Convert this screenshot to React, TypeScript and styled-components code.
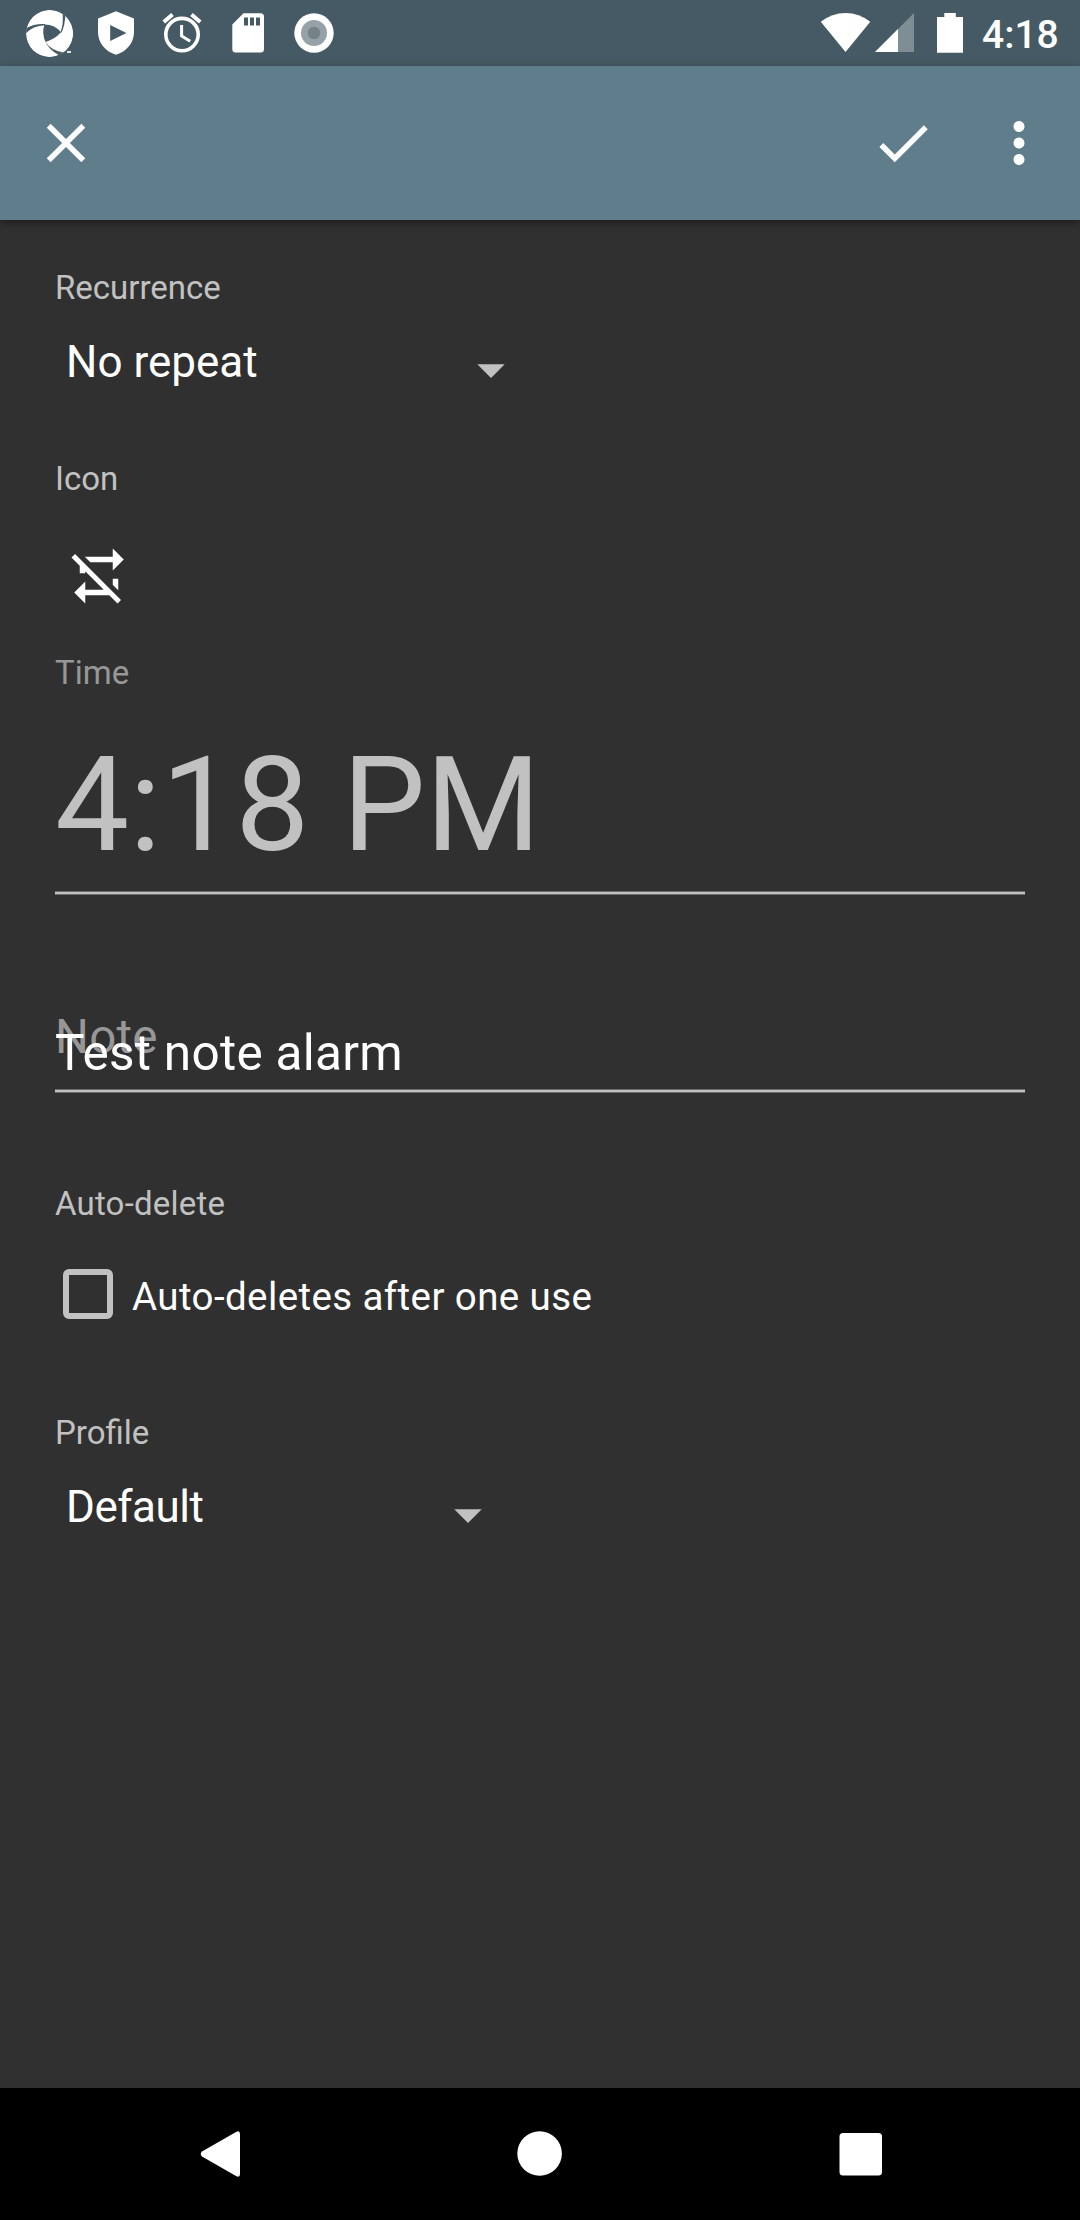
import React from 'react';
import styled, { createGlobalStyle } from 'styled-components';

const GlobalStyle = createGlobalStyle`
  *, *::before, *::after { box-sizing: border-box; }
  body { margin: 0; background: #303030; }
`;

const Screen = styled.div`
  display: flex;
  flex-direction: column;
  width: 1080px;
  height: 2220px;
  overflow: hidden;
  background: #303030;
  color: #fff;
  font-family: Roboto, sans-serif;
`;

const StatusBar = styled.header`
  display: flex;
  justify-content: space-between;
  flex: none;
  height: 66px;
  background: #455a64;
`;

const StatusGroup = styled.div`
  display: flex;
  align-items: center;
`;

const Clock = styled.span`
  width: 98px;
  font-size: 39px;
  font-weight: 500;
  line-height: 66px;
  padding-top: 4px;
`;

const Toolbar = styled.nav`
  display: flex;
  align-items: center;
  flex: none;
  height: 154px;
  padding: 0 28px 0 33px;
  background: #607d8b;
  box-shadow: 0 3px 8px rgba(0, 0, 0, 0.4);
`;

const IconButton = styled.button<{ $gap?: number }>`
  display: flex;
  flex: none;
  margin: 0 0 0 ${(p) => p.$gap ?? 0}px;
  padding: 0;
  border: 0;
  background: none;
  color: inherit;
`;

const Spacer = styled.div`
  flex: 1;
`;

const Form = styled.main`
  display: flex;
  flex-direction: column;
  flex: 1;
  padding: 48px 55px 0;
`;

const Field = styled.section<{ $height: number }>`
  display: flex;
  flex-direction: column;
  flex: none;
  height: ${(p) => p.$height}px;
`;

const Label = styled.label<{ $dim?: boolean; $tracking?: number }>`
  font-size: 33px;
  line-height: 39px;
  letter-spacing: ${(p) => p.$tracking ?? 0}px;
  color: ${(p) => (p.$dim ? '#979797' : '#c1c1c1')};
`;

const Dropdown = styled.div<{ $width: number; $tracking?: number }>`
  display: flex;
  justify-content: space-between;
  width: ${(p) => p.$width}px;
  margin-top: 29px;
  padding-left: 11px;
  font-size: 44px;
  line-height: 52px;
  letter-spacing: ${(p) => p.$tracking ?? 0}px;
`;

const Arrow = styled.svg`
  width: 28px;
  height: 14px;
  margin-top: 28px;
  fill: #c1c1c1;
`;

const IconPicker = styled.div`
  padding: 45px 0 0 11px;
  display: flex;
`;

const Underlined = styled.div`
  background: linear-gradient(#6c6c6c 1px, #c1c1c1 1px, #c1c1c1 3px, #6c6c6c 3px) bottom / 100% 4px no-repeat;
`;

const TimeValue = styled(Underlined)`
  height: 203px;
  padding-top: 36px;
  font-size: 132px;
  line-height: 155px;
  color: #c1c1c1;
`;

const NoteValue = styled(Underlined)`
  position: relative;
  height: 74px;
  padding-top: 5px;
  font-size: 49.5px;
  line-height: 58px;
  letter-spacing: 0.28px;
`;

const FloatingHint = styled.span`
  position: absolute;
  left: 0;
  top: -10px;
  font-size: 47.5px;
  line-height: 56px;
  color: #979797;
`;

const NoteText = styled.span`
  position: relative;
`;

const CheckRow = styled.div`
  display: flex;
  align-items: center;
  height: 50px;
  margin: 46px 0 0 8px;
  font-size: 38.5px;
  letter-spacing: 0.4px;
`;

const CheckBox = styled.span`
  width: 50px;
  height: 50px;
  margin-right: 19px;
  border: 6px solid #c1c1c1;
  border-radius: 6px;
`;

const CheckText = styled.span`
  padding-top: 6px;
  line-height: 46px;
`;

const NavBar = styled.footer`
  display: flex;
  align-items: center;
  justify-content: space-between;
  flex: none;
  height: 132px;
  padding: 0 197px 0 200px;
  background: #000;
`;

const DropArrow = () => (
  <Arrow viewBox="0 0 28 14">
    <path d="M.3.3h27.4L14 14z" />
  </Arrow>
);

const MaterialIcon = ({ d }: { d: string }) => (
  <svg width="66" height="66" viewBox="0 0 24 24" fill="#fff">
    <path d={d} />
  </svg>
);

const NotificationIcons = () => (
  <svg width="350" height="66" viewBox="0 0 350 66" fill="#fff">
    <clipPath id="disc">
      <circle cx="49.600" cy="33.500" r="23.600" />
    </clipPath>
    <g clipPath="url(#disc)">
      <circle cx="49.600" cy="33.500" r="23.600" />
      <g fill="#455a64">
        <path d="M44.500 24.500Q55 24.500 61 32.300Q54.500 39.500 45.500 42Q41.500 33 44.500 24.500z" />
        <path d="M26 28.300Q34 23.500 45 24V25.200Q33 25.500 25 34z" />
        <path d="M60.300 32.300Q63.800 25 62.500 12L65.500 13.500Q65 26 61.300 32.800z" />
        <path d="M45 41.500Q51 50.500 64 52.800L69 53V57H56.500L58 54.500Q50 50.500 45 41.500z" />
      </g>
    </g>
    <path d="M67 51h4v2h-4z" opacity=".85" />
    <path
      fillRule="evenodd"
      d="M116 11.300L134 18.500V32C134 43 126.500 51.500 116 54.800C105.500 51.500 98 43 98 32V18.500zM110.200 25v16l16.200-8z"
    />
    <g fill="none" stroke="#fff" strokeWidth="3.600">
      <circle cx="182" cy="34.600" r="16.200" />
      <path d="M181.600 25v11l8.600 5.300" strokeWidth="3" />
      <path d="M163.800 22l8.700-7.400M200.200 22l-8.700-7.400" strokeWidth="4" />
    </g>
    <path
      fillRule="evenodd"
      d="M243.500 13.200H260.500Q264 13.200 264 16.700V49Q264 52.500 260.500 52.500H235.700Q232.300 52.500 232.300 49V24.400zM244 17.500v8h4v-8zM250 17.500v8h4v-8zM256 17.500v8h4v-8z"
    />
    <circle cx="314" cy="33" r="19.700" />
    <circle cx="314" cy="33" r="13" fill="#96a2a8" />
    <circle cx="314" cy="33" r="6.200" fill="#748389" />
  </svg>
);

const SystemIcons = () => (
  <svg width="162" height="66" viewBox="820 0 162 66" fill="#fff">
    <path d="M820.800 21.800Q832 13 845.500 13T870.300 21.800L845.500 52z" />
    <path d="M914 13V52H875z" fill="#7f8e94" />
    <path d="M898 29V52H875z" />
    <path d="M944.300 13h11.500v4H963v35.700H937V17h7.300z" />
  </svg>
);

export default function App() {
  return (
    <Screen>
      <GlobalStyle />
      <StatusBar>
        <NotificationIcons />
        <StatusGroup>
          <SystemIcons />
          <Clock>4:18</Clock>
        </StatusGroup>
      </StatusBar>
      <Toolbar>
        <IconButton aria-label="Close">
          <MaterialIcon d="M19 6.410L17.590 5 12 10.590 6.410 5 5 6.410 10.590 12 5 17.590 6.410 19 12 13.410 17.590 19 19 17.590 13.410 12z" />
        </IconButton>
        <Spacer />
        <IconButton aria-label="Save">
          <MaterialIcon d="M9 16.170L4.830 12l-1.420 1.410L9 19 21 7l-1.410-1.410z" />
        </IconButton>
        <IconButton aria-label="More" $gap={50}>
          <MaterialIcon d="M12 8c1.100 0 2-.900 2-2s-.900-2-2-2-2 .900-2 2 .900 2 2 2zm0 2c-1.100 0-2 .900-2 2s.900 2 2 2 2-.900 2-2-.900-2-2-2zm0 6c-1.100 0-2 .900-2 2s.900 2 2 2 2-.900 2-2-.900-2-2-2z" />
        </IconButton>
      </Toolbar>
      <Form>
        <Field $height={191}>
          <Label>Recurrence</Label>
          <Dropdown $width={449.5}>
            No repeat
            <DropArrow />
          </Dropdown>
        </Field>
        <Field $height={194}>
          <Label>Icon</Label>
          <IconPicker>
            <MaterialIcon d="M2 5.270L3.280 4L20 20.720L18.730 22L15.730 19H7V22L3 18L7 14V17H13.730L7 10.270V11H5V8.270L2 5.270M17 13H19V17.180L17 15.180V13M17 5V2L21 6L17 10V7H8.820L6.820 5H17Z" />
          </IconPicker>
        </Field>
        <Field $height={366}>
          <Label $dim>Time</Label>
          <TimeValue>4:18 PM</TimeValue>
        </Field>
        <Field $height={165}>
          <NoteValue>
            <FloatingHint>Note</FloatingHint>
            <NoteText>Test note alarm</NoteText>
          </NoteValue>
        </Field>
        <Field $height={229}>
          <Label $tracking={0.2}>Auto-delete</Label>
          <CheckRow>
            <CheckBox />
            <CheckText>Auto-deletes after one use</CheckText>
          </CheckRow>
        </Field>
        <Field $height={160}>
          <Label>Profile</Label>
          <Dropdown $width={427} $tracking={-0.5}>
            Default
            <DropArrow />
          </Dropdown>
        </Field>
      </Form>
      <NavBar>
        <svg width="41" height="46" viewBox="0 0 41 46" fill="#fff">
          <path d="M2 20.500L36 1Q40 -1 40 3V43Q40 47 36 45L2 25.500Q-.500 23 2 20.500z" />
        </svg>
        <svg width="46" height="46" viewBox="0 0 46 46" fill="#fff">
          <circle cx="22.600" cy="22.500" r="22.300" />
        </svg>
        <svg width="44" height="44" viewBox="0 0 44 44" fill="#fff">
          <rect x=".5" y="1" width="42.500" height="42.500" rx="3.500" />
        </svg>
      </NavBar>
    </Screen>
  );
}
